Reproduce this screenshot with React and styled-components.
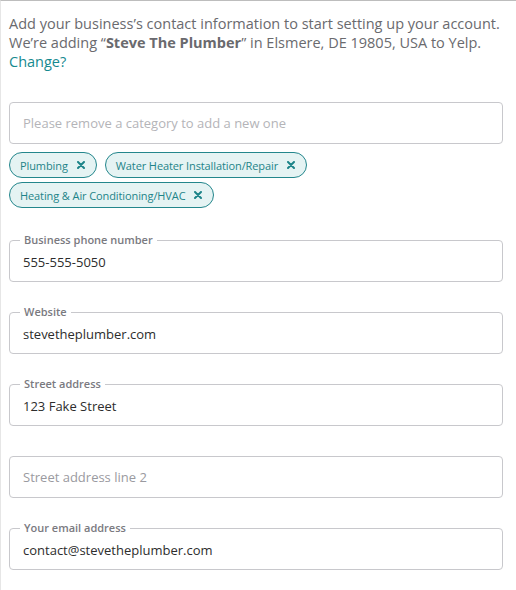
import React from "react";
import styled, { createGlobalStyle } from "styled-components";

const GlobalStyle = createGlobalStyle`
  html, body {
    margin: 0;
    padding: 0;
    background: #ffffff;
  }
  body {
    font-family: "Open Sans", "Liberation Sans", Arial, sans-serif;
  }
`;

/* ================= PAGE ================= */

const Page = styled.div`
  border-top: 1px solid #bdbdbd;
  border-left: 1px solid #e6e6e6;
  padding: 13px 13px 20px 8px;
  min-height: 590px;
  box-sizing: border-box;
`;

const Intro = styled.p`
  margin: 0;
  font-size: 14.5px;
  line-height: 19px;
  color: #6a6a6e;
`;

const Strong = styled.strong`
  font-weight: 700;
`;

const ChangeLink = styled.a`
  display: block;
  color: #168a8f;
  text-decoration: none;
`;

/* ================= INPUTS ================= */

const CategoryInput = styled.div`
  margin-top: 31px;
  height: 42px;
  box-sizing: border-box;
  border: 1px solid #c8c8cc;
  border-radius: 4px;
  display: flex;
  align-items: center;
  padding: 0 13px;
  font-size: 13px;
  color: #b4b4b8;
`;

const Chips = styled.div`
  display: flex;
  flex-wrap: wrap;
  gap: 4px 8px;
  margin-top: 8px;
`;

const Chip = styled.span`
  display: inline-flex;
  align-items: center;
  gap: 9px;
  height: 26px;
  box-sizing: border-box;
  padding: 0 11px 0 10px;
  border: 1px solid #23868c;
  border-radius: 13px;
  background: #e5f3f3;
  color: #1e8489;
  font-size: 11px;
  letter-spacing: -0.1px;
`;

const ChipClose = styled.svg`
  width: 8px;
  height: 8px;
  flex-shrink: 0;
`;

const Fields = styled.div`
  display: flex;
  flex-direction: column;
  gap: 30px;
  margin-top: 32px;
`;

const Field = styled.div`
  position: relative;
  height: 42px;
  box-sizing: border-box;
  border: 1px solid #c8c8cc;
  border-radius: 4px;
  display: flex;
  align-items: center;
  padding: 0 13px;
  font-size: 13px;
  color: ${({ $empty }) => ($empty ? "#9a9aa0" : "#2d2d2d")};
`;

/* label sits over the top border line */
const Legend = styled.span`
  position: absolute;
  top: -8px;
  left: 10px;
  padding: 0 4px;
  background: #ffffff;
  font-size: 11px;
  line-height: 14px;
  font-weight: 600;
  color: #7a7a7f;
`;

const Value = styled.span`
  margin-top: ${({ $labeled }) => ($labeled ? "2px" : "0")};
`;

/* ================= DATA ================= */

const categories = [
  "Plumbing",
  "Water Heater Installation/Repair",
  "Heating & Air Conditioning/HVAC",
];

const fields = [
  { label: "Business phone number", value: "555-555-5050" },
  { label: "Website", value: "stevetheplumber.com" },
  { label: "Street address", value: "123 Fake Street" },
  { placeholder: "Street address line 2" },
  { label: "Your email address", value: "contact@stevetheplumber.com" },
];

const CloseIcon = () => (
  <ChipClose viewBox="0 0 8 8">
    <path
      d="M1 1 L7 7 M7 1 L1 7"
      stroke="currentColor"
      strokeWidth="2"
      strokeLinecap="round"
    />
  </ChipClose>
);

/* ================= COMPONENT ================= */

const App = () => {
  return (
    <>
      <GlobalStyle />
      <Page>
        <Intro>
          Add your business’s contact information to start setting up your
          account. We’re adding “<Strong>Steve The Plumber</Strong>” in
          Elsmere, DE 19805, USA to Yelp.
          <ChangeLink href="#">Change?</ChangeLink>
        </Intro>

        <CategoryInput>Please remove a category to add a new one</CategoryInput>

        <Chips>
          {categories.map((c) => (
            <Chip key={c}>
              {c}
              <CloseIcon />
            </Chip>
          ))}
        </Chips>

        <Fields>
          {fields.map((f, i) => (
            <Field key={i} $empty={!f.value}>
              {f.label && <Legend>{f.label}</Legend>}
              <Value $labeled={!!f.label}>{f.value || f.placeholder}</Value>
            </Field>
          ))}
        </Fields>
      </Page>
    </>
  );
};

export default App;
